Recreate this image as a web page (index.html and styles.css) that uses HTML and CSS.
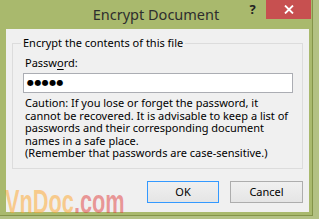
FILE: index.html
```html
<!DOCTYPE html>
<html>
<head>
<meta charset="utf-8">
<link rel="stylesheet" href="styles.css">
</head>
<body>
<div class="window">
  <div class="titlebar">
    <div class="spacer"></div>
    <div class="title">Encrypt Document</div>
    <div class="controls">
      <div class="help">?</div>
      <div class="close">
        <svg width="10" height="9" viewBox="0 0 10 9"><path d="M1 0.5 L9 8.5 M9 0.5 L1 8.5" stroke="#fff" stroke-width="1.8" fill="none"/></svg>
      </div>
    </div>
  </div>
  <div class="client">
    <fieldset class="group">
      <legend class="legend">Encrypt the contents of this file</legend>
      <div class="label">Passw<u>o</u>rd:</div>
      <div class="input"><span class="dots">●●●●●</span></div>
      <p class="caution">Caution: If you lose or forget the password, it<br>cannot be recovered. It is advisable to keep a list of<br>passwords and their corresponding document<br>names in a safe place.<br>(Remember that passwords are case-sensitive.)</p>
    </fieldset>
    <div class="buttons">
      <button class="btn btn-default">OK</button>
      <button class="btn">Cancel</button>
    </div>
  </div>
  <div class="watermark"><span class="wm-a">VnDoc</span><span class="wm-b">.com</span></div>
</div>
</body>
</html>
```
FILE: styles.css
```css
html, body {
  margin: 0;
  padding: 0;
}
body {
  background: #b3c184;
  width: 319px;
  height: 219px;
  overflow: hidden;
  font-family: "Noto Sans", "Open Sans", sans-serif;
}
.window {
  position: relative;
  width: 312px;
  height: 215px;
  background: #a9b96d;
  border-right: 1px solid #849449;
  border-bottom: 1px solid #849449;
  display: flex;
  flex-direction: column;
}
.titlebar {
  height: 29px;
  display: grid;
  grid-template-columns: 1fr auto 1fr;
}
.title {
  font-size: 14.5px;
  line-height: 20px;
  padding-top: 4px;
  color: #2e2e2e;
  white-space: nowrap;
}
.controls {
  justify-self: end;
  display: flex;
  align-items: flex-start;
  margin-right: 1px;
}
.help {
  width: 27px;
  height: 19px;
  padding-left: 3px;
  text-align: center;
  font-weight: bold;
  font-size: 13px;
  line-height: 19px;
  color: #222;
}
.close {
  width: 45px;
  height: 19px;
  background: #c75050;
  display: flex;
  align-items: center;
  justify-content: center;
}
.client {
  flex: 1;
  margin: 0 3px 3px 6px;
  background: #f0f0f0;
  display: flex;
  flex-direction: column;
  padding: 7px 6px 9px 6px;
  font-size: 11px;
  color: #000;
}
.group {
  margin: 0;
  border: 1px solid #dcdcdc;
  padding: 0 9px 8px 10px;
  min-width: 0;
}
.legend {
  padding: 0 2px;
  margin-left: -2px;
  font-size: 11px;
  line-height: 14px;
}
.label {
  padding-left: 2px;
  line-height: 14px;
  margin-top: 6px;
}
.label u {
  text-decoration-thickness: 1px;
  text-underline-offset: 2px;
}
.input {
  margin-top: 3px;
  height: 18px;
  border: 1px solid #abadb3;
  background: #fff;
  display: flex;
  align-items: center;
  padding-left: 3px;
}
.dots {
  font-family: "DejaVu Sans", sans-serif;
  font-size: 8px;
  letter-spacing: 0.4px;
  line-height: 10px;
}
.caution {
  margin: 4px 0 0 0;
  padding-left: 2px;
  line-height: 12.5px;
  white-space: nowrap;
}
.buttons {
  display: flex;
  justify-content: flex-end;
  gap: 11px;
  margin-top: 12px;
}
.btn {
  height: 22px;
  width: 73px;
  border: 1px solid #adadad;
  background: linear-gradient(#f0f0f0, #e5e5e5);
  font-family: "Noto Sans", "Open Sans", sans-serif;
  font-size: 11px;
  color: #000;
  padding: 0;
}
.btn-default {
  width: 72px;
  border-color: #3399ff;
}
.watermark {
  position: absolute;
  left: 5px;
  top: 186px;
  font-family: "Liberation Sans", sans-serif;
  font-weight: bold;
  font-size: 34px;
  line-height: 30px;
  white-space: nowrap;
  transform: scaleX(0.64);
  transform-origin: left top;
  pointer-events: none;
}
.wm-a {
  color: rgba(255, 165, 40, 0.5);
}
.wm-b {
  color: rgba(225, 50, 50, 0.48);
}
```
